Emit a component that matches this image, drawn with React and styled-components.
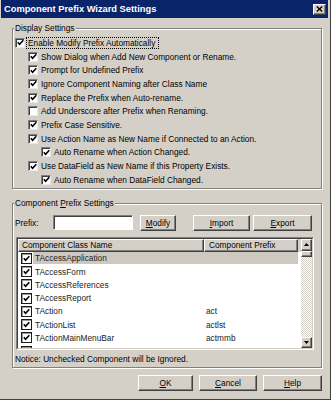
import React from "react";
import styled, { createGlobalStyle } from "styled-components";

const face = "#d4d0c8";

const GlobalStyle = createGlobalStyle`
  html, body { margin: 0; padding: 0; background: ${face}; }
  body {
    font-family: "Liberation Sans", Arial, sans-serif;
    font-size: 8.3px;
    color: #000;
  }
  * { box-sizing: border-box; }
`;

const raised = `
  background: ${face};
  border: 1px solid;
  border-color: #fff #404040 #404040 #fff;
  box-shadow: inset -1px -1px 0 #808080;
`;

const Window = styled.div`
  width: 331px;
  height: 400px;
  display: flex;
  flex-direction: column;
  background: ${face};
  padding: 0 2px 2px 1px;
  border-right: 1px solid #404040;
  border-bottom: 1px solid #404040;
`;

const TitleBar = styled.div`
  height: 18px;
  flex: none;
  display: flex;
  align-items: center;
  justify-content: space-between;
  padding: 0 2px 0 3px;
  background: #0a246a;
  color: #fff;
  font-weight: bold;
  font-size: 9.3px;
  white-space: nowrap;
`;

const CloseButton = styled.span`
  ${raised}
  width: 13px;
  height: 11px;
  display: flex;
  align-items: center;
  justify-content: center;
`;

const Body = styled.div`
  display: flex;
  flex-direction: column;
  padding: 0 6px 0 11px;
`;

const Group = styled.div`
  position: relative;
  margin-top: ${(p) => p.$top}px;
  padding: ${(p) => p.$pad};
  border: 1px solid #808080;
  box-shadow: inset 1px 1px 0 #fff, 1px 1px 0 #fff;
`;

const Legend = styled.span`
  position: absolute;
  top: -6px;
  left: 1px;
  padding: 0 1px;
  line-height: 10px;
  background: ${face};
  white-space: nowrap;
`;

const CheckRow = styled.div`
  display: flex;
  align-items: center;
  height: 13.7px;
  padding-left: ${(p) => 2 + p.$level * 13}px;
`;

const Box = styled.span`
  width: 10px;
  height: 10px;
  flex: none;
  display: flex;
  align-items: center;
  justify-content: center;
  background: #fff;
  border: 1px solid;
  border-color: #808080 #e8e8e8 #e8e8e8 #808080;
  box-shadow: inset 1px 1px 0 #404040;
`;

const CheckText = styled.span`
  margin-left: ${(p) => (p.$focus ? 2 : 3)}px;
  padding: ${(p) => (p.$focus ? "0 3px 0 1px" : "0")};
  line-height: 10px;
  outline: ${(p) => (p.$focus ? "1px dotted #000" : "none")};
  white-space: nowrap;
`;

const PrefixRow = styled.div`
  display: flex;
  align-items: center;
  height: 16px;
  padding-left: 2px;
`;

const FieldLabel = styled.span`
  width: 38px;
  flex: none;
`;

const TextBox = styled.span`
  width: 80px;
  height: 15px;
  flex: none;
  background: #fff;
  border: 1px solid;
  border-color: #808080 #fff #fff #808080;
  box-shadow: inset 1px 1px 0 #404040;
`;

const Button = styled.span`
  ${raised}
  width: ${(p) => p.$w}px;
  height: 16px;
  flex: none;
  margin-left: ${(p) => p.$gap || 0}px;
  display: flex;
  align-items: center;
  justify-content: center;
  white-space: nowrap;
`;

const ListBox = styled.div`
  margin: 6px 7px 0 3px;
  height: 113px;
  border: 1px solid;
  border-color: #808080 #fff #fff #808080;
  display: flex;
`;

const ListInner = styled.div`
  flex: 1;
  display: flex;
  border: 1px solid;
  border-color: #404040 ${face} ${face} #404040;
  background: #fff;
  overflow: hidden;
`;

const ListMain = styled.div`
  flex: 1;
  display: flex;
  flex-direction: column;
  overflow: hidden;
`;

const HeaderRow = styled.div`
  display: flex;
  height: 13px;
  flex: none;
  background: ${face};
`;

const HeaderCell = styled.span`
  ${raised}
  width: ${(p) => p.$w}px;
  flex: none;
  padding-left: ${(p) => p.$pad}px;
  display: flex;
  align-items: center;
  white-space: nowrap;
`;

const Row = styled.div`
  display: flex;
  align-items: center;
  height: 13.3px;
  flex: none;
  padding-left: 3px;
`;

const ItemBox = styled.span`
  width: 11px;
  height: 11px;
  flex: none;
  display: flex;
  align-items: center;
  justify-content: center;
  background: #fff;
  border: 1px solid #1a1a1a;
  box-shadow: inset 1px 1px 0 #9a9a9a;
`;

const Cell = styled.span`
  width: ${(p) => p.$w}px;
  height: 12px;
  flex: none;
  margin-left: ${(p) => p.$gap || 0}px;
  padding-left: 2px;
  display: flex;
  align-items: center;
  background: ${(p) => (p.$selected ? "#cdc9c1" : "transparent")};
  color: #222;
  white-space: nowrap;
`;

const ScrollBar = styled.div`
  width: 11px;
  flex: none;
  display: flex;
  flex-direction: column;
  background: repeating-conic-gradient(#fff 0 25%, ${face} 0 50%) 0 0 / 2px 2px;
`;

const ArrowButton = styled.span`
  ${raised}
  height: ${(p) => p.$h}px;
  flex: none;
  display: flex;
  align-items: center;
  justify-content: center;
`;

const Track = styled.span`
  flex: 1;
`;

const Notice = styled.div`
  margin-top: 4px;
  padding-left: 2px;
  line-height: 10px;
`;

const ButtonRow = styled.div`
  display: flex;
  justify-content: flex-end;
  gap: 6px;
  margin-top: 7px;
`;

const Tick = ({ size = 7 }) => (
  <svg width={size} height={size} viewBox="0 0 7 7">
    <path d="M0.8 3.2 L2.6 5.2 L6.3 1.2" fill="none" stroke="#000" strokeWidth="1.6" />
  </svg>
);

const Arrow = ({ down }) => (
  <svg width="5" height="3" viewBox="0 0 5 3">
    <path d={down ? "M0 0 H5 L2.5 3 Z" : "M0 3 H5 L2.5 0 Z"} fill="#000" />
  </svg>
);

const options = [
  { level: 0, text: "Enable Modify Prefix Automatically", checked: true, focus: true },
  { level: 1, text: "Show Dialog when Add New Component or Rename.", checked: true },
  { level: 1, text: "Prompt for Undefined Prefix", checked: true },
  { level: 1, text: "Ignore Component Naming after Class Name", checked: true },
  { level: 1, text: "Replace the Prefix when Auto-rename.", checked: true },
  { level: 1, text: "Add Underscore after Prefix when Renaming.", checked: false },
  { level: 1, text: "Prefix Case Sensitive.", checked: true },
  { level: 1, text: "Use Action Name as New Name if Connected to an Action.", checked: true },
  { level: 2, text: "Auto Rename when Action Changed.", checked: true },
  { level: 1, text: "Use DataField as New Name if this Property Exists.", checked: true },
  { level: 2, text: "Auto Rename when DataField Changed.", checked: true },
];

// the last entry is only scrolled in far enough to show its checkbox
const components = [
  ["TAccessApplication", ""],
  ["TAccessForm", ""],
  ["TAccessReferences", ""],
  ["TAccessReport", ""],
  ["TAction", "act"],
  ["TActionList", "actlst"],
  ["TActionMainMenuBar", "actmmb"],
  ["", ""],
];

export default function App() {
  return (
    <>
      <GlobalStyle />
      <Window>
        <TitleBar>
          <span>Component Prefix Wizard Settings</span>
          <CloseButton>
            <svg width="7" height="6" viewBox="0 0 7 6">
              <path d="M0.8 0.5 L6.2 5.5 M6.2 0.5 L0.8 5.5" stroke="#000" strokeWidth="1.4" />
            </svg>
          </CloseButton>
        </TitleBar>
        <Body>
          <Group $top={10} $pad="7px 0 1px">
            <Legend>Display Settings</Legend>
            {options.map((o) => (
              <CheckRow key={o.text} $level={o.level}>
                <Box>{o.checked && <Tick />}</Box>
                <CheckText $focus={o.focus}>{o.text}</CheckText>
              </CheckRow>
            ))}
          </Group>

          <Group $top={14} $pad="11px 0 3px">
            <Legend>
              Component <u>P</u>refix Settings
            </Legend>
            <PrefixRow>
              <FieldLabel>Prefix:</FieldLabel>
              <TextBox />
              <Button $w={36} $gap={7}>
                <span>
                  <u>M</u>odify
                </span>
              </Button>
              <Button $w={57} $gap={17}>
                <span>
                  <u>I</u>mport
                </span>
              </Button>
              <Button $w={59} $gap={3}>
                <span>
                  <u>E</u>xport
                </span>
              </Button>
            </PrefixRow>
            <ListBox>
              <ListInner>
                <ListMain>
                  <HeaderRow>
                    <HeaderCell $w={186} $pad={3}>Component Class Name</HeaderCell>
                    <HeaderCell $w={94} $pad={4}>Component Prefix</HeaderCell>
                  </HeaderRow>
                  {components.map(([name, prefix], i) => (
                    <Row key={i}>
                      <ItemBox>
                        <Tick />
                      </ItemBox>
                      <Cell $w={171} $gap={1} $selected={i === 0}>
                        {name}
                      </Cell>
                      <Cell $w={94} $selected={i === 0}>
                        {prefix}
                      </Cell>
                    </Row>
                  ))}
                </ListMain>
                <ScrollBar>
                  <ArrowButton $h={12}>
                    <Arrow />
                  </ArrowButton>
                  <ArrowButton $h={6} />
                  <Track />
                  <ArrowButton $h={11}>
                    <Arrow down />
                  </ArrowButton>
                </ScrollBar>
              </ListInner>
            </ListBox>
            <Notice>Notice: Unchecked Component will be Ignored.</Notice>
          </Group>

          <ButtonRow>
            <Button $w={55}>
              <span>
                <u>O</u>K
              </span>
            </Button>
            <Button $w={58}>
              <span>
                <u>C</u>ancel
              </span>
            </Button>
            <Button $w={59}>
              <span>
                <u>H</u>elp
              </span>
            </Button>
          </ButtonRow>
        </Body>
      </Window>
    </>
  );
}
